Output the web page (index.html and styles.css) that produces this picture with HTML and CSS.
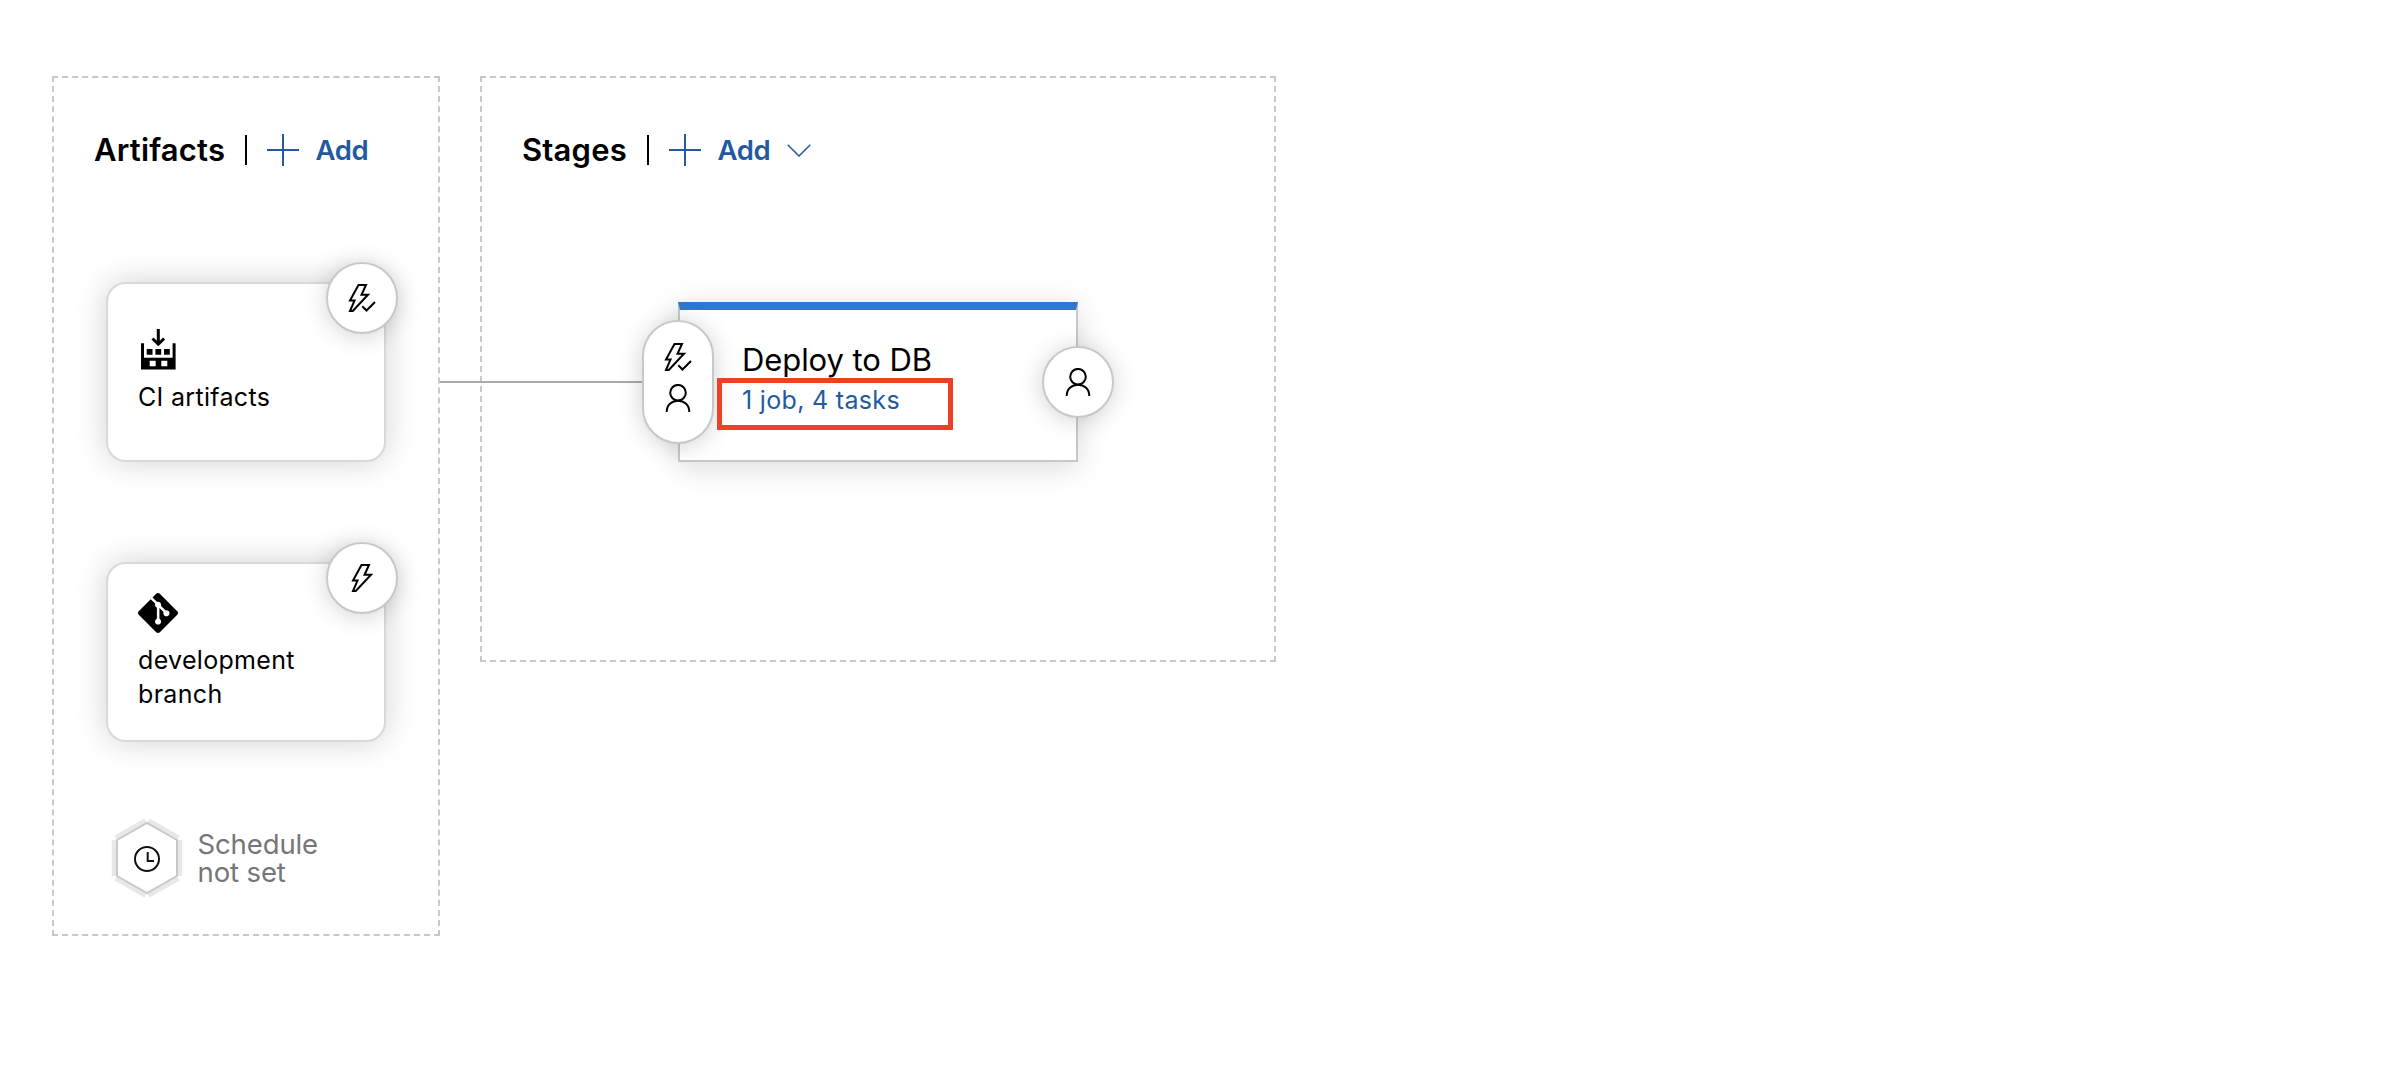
FILE: index.html
```html
<!DOCTYPE html>
<html lang="en">
<head>
<meta charset="utf-8">
<title>Release pipeline</title>
<link rel="stylesheet" href="styles.css">
</head>
<body>
<svg class="defs" aria-hidden="true">
  <symbol id="bolt" viewBox="0 0 28 28"><path d="M13.500 1H21L16.500 10.800H23L7.800 27H5L9.500 16.600H5Z"/></symbol>
  <symbol id="bolt-check" viewBox="0 0 28 28"><path d="M10.500 1H18L13.500 10.800H20L4.800 27H2L6.500 16.600H2Z"/><path d="M14.300 22.200L18.500 26.500L27 18"/></symbol>
  <symbol id="person" viewBox="0 0 28 28"><circle cx="14" cy="8.700" r="7.800"/><path d="M2.700 28C2.700 12.900 25.300 12.900 25.300 28"/></symbol>
  <symbol id="plus" viewBox="0 0 32 32"><path d="M0 16H32M16 0V32"/></symbol>
</svg>
<main class="pipeline">
  <section class="panel artifacts">
    <header class="panel-head">
      <h2 class="title">Artifacts</h2>
      <span class="divider"></span>
      <button class="add"><svg class="plus"><use href="#plus"/></svg>Add</button>
    </header>
    <article class="card card-ci">
      <span class="badge corner"><svg class="icon"><use href="#bolt-check"/></svg></span>
      <svg class="build" viewBox="0 0 35 41"><path fill-rule="evenodd" d="M0 14.300H3V28.700H31.600V14.300H34.600V40.400H0ZM8.700 31.700V37.300H14.700V31.700ZM20.300 31.700V37.300H26.300V31.700Z"/><path d="M5.700 20H11.500V25.700H5.700ZM14.400 20H20.200V25.700H14.400ZM23 20H28.800V25.700H23Z"/><path class="arrow" d="M17.300 0V15M11.500 9.500L17.300 15.200L23.100 9.500"/></svg>
      <p class="name">CI artifacts</p>
    </article>
    <article class="card card-git">
      <span class="badge corner"><svg class="icon"><use href="#bolt"/></svg></span>
      <svg class="git" viewBox="0 0 24 24"><path d="M23.546 10.930L13.067.452c-.604-.603-1.582-.603-2.188 0L8.708 2.627l2.760 2.760c.645-.215 1.379-.070 1.889.441.516.515.658 1.258.438 1.900l2.658 2.660c.645-.223 1.387-.078 1.900.435.721.720.721 1.884 0 2.604-.719.719-1.881.719-2.600 0-.539-.541-.674-1.337-.404-1.996L12.860 8.955v6.525c.176.086.342.203.488.348.713.721.713 1.883 0 2.600-.719.721-1.889.721-2.609 0-.719-.719-.719-1.879 0-2.598.182-.180.387-.316.605-.406V8.835c-.217-.091-.424-.222-.600-.401-.545-.545-.676-1.342-.396-2.009L7.636 3.700.450 10.881c-.600.605-.600 1.584 0 2.189l10.480 10.477c.604.604 1.582.604 2.186 0l10.430-10.430c.605-.603.605-1.582 0-2.187"/></svg>
      <p class="name">development<br>branch</p>
    </article>
    <div class="schedule">
      <svg class="hex" viewBox="0 0 76 84">
        <path class="halo" d="M5 24V60M71 24V60M6.500 21.400L36.500 4.400M39.500 4.400L69.500 21.400M6.500 62.600L36.500 79.600M39.500 79.600L69.500 62.600"/>
        <path class="edge" d="M8 24L38 7L68 24V60L38 77L8 60Z"/>
        <circle class="clock" cx="38" cy="43" r="12"/><path class="clock" d="M38.700 36V45H45"/>
      </svg>
      <p class="schedule-text">Schedule<br>not set</p>
    </div>
  </section>
  <section class="panel stages">
    <header class="panel-head">
      <h2 class="title">Stages</h2>
      <span class="divider"></span>
      <button class="add"><svg class="plus"><use href="#plus"/></svg>Add<svg class="chevron" viewBox="0 0 24 13"><path d="M.700.700L12 12L23.300.700"/></svg></button>
    </header>
    <span class="connector"></span>
    <article class="stage">
      <span class="badge pre"><svg class="icon"><use href="#bolt-check"/></svg><svg class="icon"><use href="#person"/></svg></span>
      <span class="badge post"><svg class="icon"><use href="#person"/></svg></span>
      <h3 class="stage-name">Deploy to DB</h3>
      <a class="tasks">1 job, 4 tasks</a>
      <span class="highlight"></span>
    </article>
  </section>
</main>
</body>
</html>
```
FILE: styles.css
```css
* { box-sizing: border-box; }
body { margin: 0; background: #fff; color: #000; font-family: Inter, "Liberation Sans", sans-serif; }
h2, h3, p { margin: 0; font-weight: 400; }
svg { display: block; flex: none; }
.defs { position: absolute; width: 0; height: 0; }
.pipeline { display: flex; align-items: flex-start; gap: 40px; padding: 76px 52px; }
.panel { border: 2px dashed #c8c8c8; position: relative; }
.artifacts { width: 388px; height: 860px; padding: 52px 52px 0; }
.stages { width: 796px; height: 586px; padding: 52px 0 0 196px; }
.panel-head { display: flex; align-items: center; height: 40px; margin-left: -12px; }
.stages .panel-head { margin-left: -156px; }
.title { font-size: 31px; font-weight: 600; line-height: 42px; letter-spacing: .18px; white-space: nowrap; }
.artifacts .title { width: 151px; }
.stages .title { width: 125px; }
.divider { width: 2px; height: 30px; background: #000; }
.add { display: flex; align-items: center; margin: 0 0 0 20px; padding: 0; border: 0; background: none; color: #235a9f; font: 600 27.500px/40px Inter, sans-serif; letter-spacing: -.350px; }
.plus { width: 32px; height: 32px; margin-right: 16.500px; stroke: currentColor; stroke-width: 2; }
.chevron { width: 24px; height: 13px; margin-left: 17px; fill: none; stroke: currentColor; stroke-width: 1.500; }
.card { position: relative; width: 280px; height: 180px; border: 2px solid #d8d8d8; border-radius: 20px; background: #fff; box-shadow: 0 0 32px rgba(0, 0, 0, .18); padding-left: 30px; }
.card-ci { margin-top: 112px; padding-top: 45px; }
.card-git { margin-top: 100px; padding-top: 29px; }
.name { font-size: 25px; line-height: 34px; letter-spacing: .320px; white-space: nowrap; }
.build { width: 35px; height: 41px; margin-left: 2.500px; }
.card-ci .name { margin-top: 10px; }
.arrow { fill: none; stroke: #000; stroke-width: 3; }
.git { width: 40px; height: 40px; margin-bottom: 10px; }
.badge { position: absolute; display: flex; flex-direction: column; align-items: center; justify-content: center; width: 72px; height: 72px; border: 2px solid #c8c8c8; border-radius: 36px; background: #fff; box-shadow: 0 2px 24px rgba(0, 0, 0, .18); }
.icon { width: 28px; height: 28px; fill: none; stroke: #000; stroke-width: 2; }
.corner { right: -14px; top: -22px; }
.schedule { display: flex; align-items: center; gap: 12.500px; margin: 74px 0 0 3px; }
.hex { width: 76px; height: 84px; fill: none; }
.halo { stroke: #e8e8e8; stroke-width: 4.500; }
.edge { fill: #fff; stroke: #c8c8c8; stroke-width: 2; }
.clock { stroke: #111; stroke-width: 2; }
.schedule-text { font-size: 27.500px; line-height: 28px; letter-spacing: -.120px; color: #767676; white-space: nowrap; }
.connector { position: absolute; left: -42px; top: 303px; width: 202px; height: 2px; background: #aaa; }
.stage { position: relative; width: 400px; height: 160px; margin-top: 132px; border: 2px solid #c8c8c8; border-top: 8px solid #3078cf; background: #fff; box-shadow: 0 5px 28px rgba(0, 0, 0, .15); padding: 30px 0 0 62px; }
.stage-name { font-size: 31px; line-height: 40px; letter-spacing: -.080px; white-space: nowrap; }
.tasks { display: block; font-size: 25px; line-height: 40px; letter-spacing: .320px; color: #235a9f; white-space: nowrap; }
.pre { left: -38px; top: 10px; height: 124px; gap: 13px; padding-bottom: 9px; }
.post { right: -38px; top: 36px; }
.highlight { position: absolute; left: 37px; top: 68px; width: 236px; height: 52px; border: 5px solid #ee4026; }
```
